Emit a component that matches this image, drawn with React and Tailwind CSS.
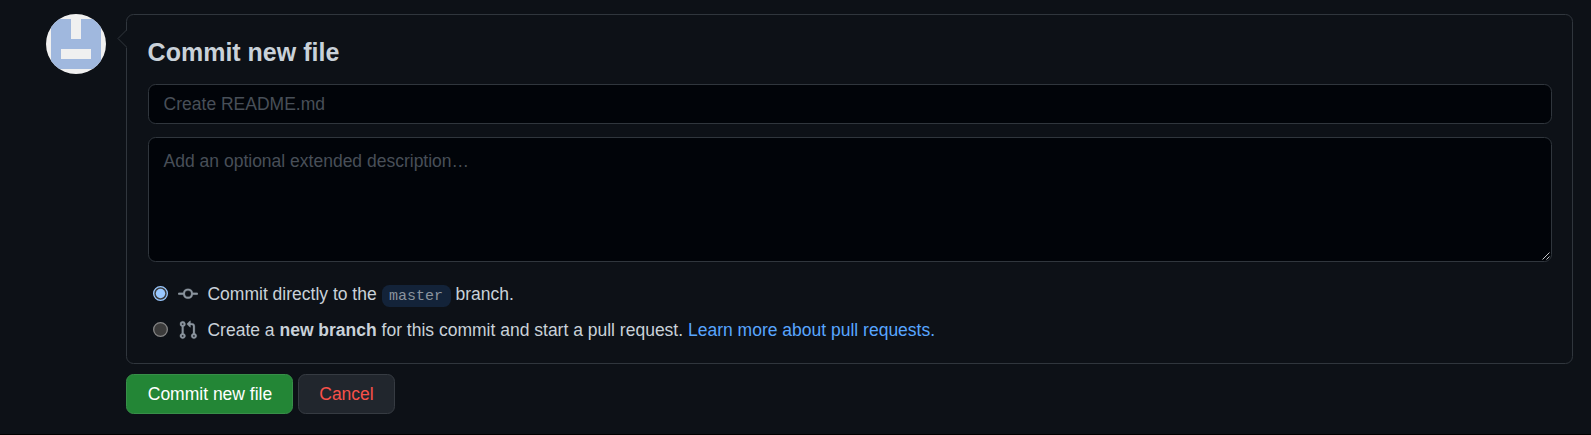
function Identicon() {
  return (
    <svg className="block size-[60px] shrink-0 rounded-full" viewBox="0 0 60 60" aria-hidden="true">
      <rect width="60" height="60" fill="#f0f0f0" />
      <path
        d="M5 5H25V25H35V5H55V55H5ZM15 35V45H45V35Z"
        fill="#a0b8de"
        fillRule="evenodd"
        shapeRendering="crispEdges"
      />
    </svg>
  );
}

function CommitIcon() {
  return (
    <svg className="block size-5 shrink-0 fill-[#8b949e] stroke-[#8b949e]" strokeWidth="0.2" viewBox="0 0 16 16" aria-hidden="true">
      <path
        fillRule="evenodd"
        d="M10.5 7.75a2.5 2.5 0 11-5 0 2.5 2.5 0 015 0zm1.43.75a4.002 4.002 0 01-7.86 0H.75a.75.75 0 110-1.5h3.32a4.001 4.001 0 017.86 0h3.32a.75.75 0 110 1.5h-3.32z"
      />
    </svg>
  );
}

function PullRequestIcon() {
  return (
    <svg className="block size-5 shrink-0 fill-[#8b949e] stroke-[#8b949e]" strokeWidth="0.2" viewBox="0 0 16 16" aria-hidden="true">
      <path
        fillRule="evenodd"
        d="M7.177 3.073L9.573.677A.25.25 0 0110 .854v4.792a.25.25 0 01-.427.177L7.177 3.427a.25.25 0 010-.354zM3.75 2.5a.75.75 0 100 1.5.75.75 0 000-1.5zm-2.25.75a2.25 2.25 0 113 2.122v5.256a2.251 2.251 0 11-1.5 0V5.372A2.25 2.25 0 011.5 3.25zM11 2.5h-1V4h1a1 1 0 011 1v5.628a2.251 2.251 0 101.5 0V5A2.5 2.5 0 0011 2.5zm1 10.25a.75.75 0 111.5 0 .75.75 0 01-1.5 0zM3.75 12a.75.75 0 100 1.5.75.75 0 000-1.5z"
      />
    </svg>
  );
}

function Choice({ icon, checked, children }) {
  return (
    <label className="flex h-[26px] items-center">
      <input type="radio" name="target" defaultChecked={checked} className="peer sr-only" />
      <svg
        className="mb-px ml-[5.4px] block size-[15px] shrink-0 fill-[#3b3b3b] stroke-[#858585] peer-checked:stroke-[#99c8ff] [&>.dot]:opacity-0 peer-checked:[&>.dot]:opacity-100"
        viewBox="0 0 15 15"
        aria-hidden="true"
      >
        <circle cx="7.5" cy="7.5" r="6.85" strokeWidth="1.3" />
        <circle className="dot fill-[#99c8ff] stroke-none" cx="7.5" cy="7.5" r="4.7" />
      </svg>
      <span className="ml-[10px]">{icon}</span>
      <span className="ml-[9.5px] whitespace-nowrap leading-[26px]">{children}</span>
    </label>
  );
}

export default function App() {
  return (
    <div className="flex h-[435px] w-[1591px] items-start border-b border-black bg-[#0d1117] pt-3.5 pl-[46px] font-['Liberation_Sans',Arial,sans-serif] text-[17.5px] text-[#c9d1d9] scheme-dark">
      <Identicon />
      <form className="ml-5 w-[1447px]" onSubmit={(e) => e.preventDefault()}>
        <div className="relative h-[350px] rounded-[7.5px] border border-[#30363d] pt-[21px] pr-[20.4px] pl-[20.6px]">
          <svg className="absolute top-[14px] -left-[10px] h-[20px] w-[10px]" viewBox="0 0 10 20" aria-hidden="true">
            <path d="M10 1V19L1 10Z" fill="#0d1117" />
            <path d="M9.5 1L1 9.5L9.5 18" fill="none" stroke="#30363d" />
          </svg>
          <h3 className="text-[25px] leading-[33px] font-bold">Commit new file</h3>
          <input
            type="text"
            aria-label="Commit message"
            placeholder="Create README.md"
            className="mt-[15px] block h-10 w-full rounded-[7.5px] border border-[#30363d] bg-[#010409] px-[15px] placeholder:text-[#484f58] placeholder:opacity-100"
          />
          <div className="relative mt-[13px]">
            <textarea
              aria-label="Extended description"
              placeholder="Add an optional extended description…"
              className="block h-[125px] w-full resize-none rounded-[7.5px] border border-[#30363d] bg-[#010409] px-[15px] py-[10px] leading-[26px] placeholder:text-[#484f58] placeholder:opacity-100"
            />
            <svg
              className="absolute right-[2px] bottom-[2px] size-2"
              viewBox="0 0 8 8"
              fill="none"
              stroke="#c4c6c9"
              aria-hidden="true"
            >
              <path d="M0.5 7.5L7.5 0.5M4.5 7.5L7.5 4.5" />
            </svg>
          </div>
          <div className="mt-[19px] flex flex-col gap-[10px]">
            <Choice icon={<CommitIcon />} checked>
              Commit directly to the{" "}
              <span className="inline-block rounded-[7.5px] bg-[#388bfd26] px-[7.5px] pt-[2px] font-['Liberation_Mono',monospace] text-[15px] leading-[20px] text-[#8b949e]">
                master
              </span>{" "}
              branch.
            </Choice>
            <Choice icon={<PullRequestIcon />}>
              Create a <strong>new branch</strong> for this commit and start a pull request.{" "}
              <a className="text-[#58a6ff]">Learn more about pull requests.</a>
            </Choice>
          </div>
        </div>
        <div className="mt-2.5 flex gap-[5px]">
          <button className="h-10 w-[167px] rounded-[7.5px] border border-[#388f49] bg-[#238636] pl-px text-white">
            Commit new file
          </button>
          <button className="h-10 w-[97px] rounded-[7.5px] border border-[#363b42] bg-[#21262d] text-[#f85149]">
            Cancel
          </button>
        </div>
      </form>
    </div>
  );
}
